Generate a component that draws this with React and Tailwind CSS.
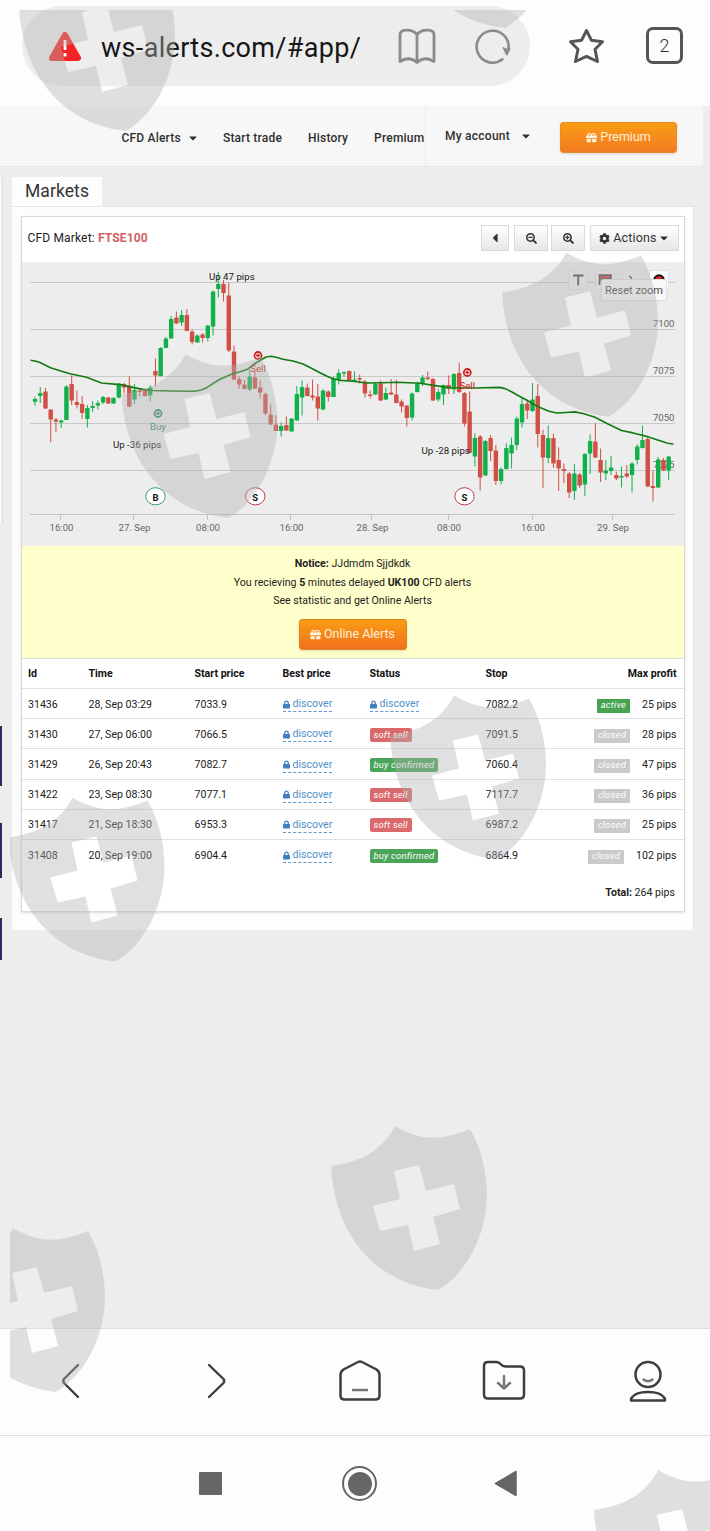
import { FaCaretDown, FaCaretLeft, FaCog, FaGift, FaLock, FaSearchMinus, FaSearchPlus } from "react-icons/fa";

const CANDLES = [
  ["g", 396.7, 399, 401.7, 405.7], ["g", 387, 393, 396, 403], ["r", 388, 391.5, 408.5, 409], ["r", 409.5, 409.5, 419.5, 442],
  ["r", 418, 419.5, 421.5, 432], ["g", 419.5, 420.5, 422.5, 428], ["g", 385, 386.5, 420, 420], ["r", 375.5, 384, 400.5, 405],
  ["r", 390.5, 402, 405, 408.5], ["r", 396, 404, 413, 419], ["g", 405, 408, 419, 427.5], ["g", 401, 406, 408, 412],
  ["g", 400.5, 403, 405.5, 409.5], ["g", 396, 397, 402.5, 404], ["r", 397, 397.5, 403.5, 404], ["g", 397, 398, 403.5, 404],
  ["g", 383, 383.5, 397.5, 398.5], ["r", 383, 384, 387.5, 393], ["r", 376.5, 385.5, 406.5, 407], ["g", 384, 390, 399.5, 404],
  ["r", 388, 390.5, 392, 396.5], ["r", 389, 389.5, 396, 396.5], ["g", 385, 387.5, 395.5, 401.5], ["r", 358.5, 371, 375.5, 386.5],
  ["g", 347, 348, 376, 376.5], ["g", 337, 338.5, 348, 348], ["g", 316, 319, 338.5, 338.5], ["r", 311.5, 317.5, 323.5, 324],
  ["g", 310, 315, 322.5, 326], ["r", 309, 315, 331, 331], ["r", 329.5, 331.5, 342, 344.5], ["g", 334.5, 335.5, 342.5, 342.5],
  ["r", 333, 334.5, 338, 342.5], ["g", 325, 325.5, 338, 341.5], ["g", 290.5, 291.5, 326.5, 335.5], ["g", 272, 284, 289, 297.5],
  ["r", 280, 284, 293, 301.5], ["r", 282.5, 295.5, 350.5, 352], ["r", 345.5, 351.5, 379.5, 380], ["r", 376.5, 379, 384.5, 388.5],
  ["r", 380, 384.5, 389, 389], ["g", 370, 376.5, 389.5, 391], ["r", 371.5, 377.5, 388.5, 389], ["r", 380.5, 387.5, 392.5, 398.5],
  ["r", 392.5, 394, 413.5, 415], ["r", 404.5, 414.5, 424.5, 425], ["r", 415, 424.5, 431, 431], ["g", 422.5, 426, 431, 436.5],
  ["r", 416.5, 425, 430.5, 431], ["g", 418, 418.5, 431.5, 431.5], ["g", 386, 394, 420.5, 420.5], ["g", 380.5, 387, 397.5, 415.5],
  ["r", 383.5, 387.5, 396, 396.5], ["r", 379.5, 395.5, 397.5, 400.5], ["r", 384, 396.5, 408.5, 420.5], ["g", 389.5, 390.5, 409.5, 410],
  ["r", 390.5, 391.5, 397, 401.5], ["g", 376.5, 378.5, 397, 397], ["g", 369.5, 373, 379, 384.5], ["g", 371.5, 372, 373, 376.5],
  ["r", 370.5, 371, 381, 381], ["g", 371.5, 379.5, 381, 381], ["r", 374.5, 378, 379.5, 383.5], ["r", 380, 381.5, 393.5, 397.5],
  ["r", 390.5, 394.5, 396, 398.5], ["g", 383, 384, 394.5, 395], ["r", 380.5, 383.5, 400.5, 401], ["g", 387.5, 393, 399.5, 400],
  ["r", 379, 392.5, 394.5, 395], ["r", 379.5, 394.5, 403, 403.5], ["r", 399.5, 401.5, 406.5, 412.5], ["r", 405, 405.5, 418, 426.5],
  ["g", 392.5, 393.5, 417.5, 420.5], ["g", 381.5, 383.5, 392, 392.5], ["g", 375, 377.5, 383.5, 386], ["r", 371.5, 377.5, 379, 380.5],
  ["r", 378, 379, 400.5, 401], ["g", 388.5, 392, 399.5, 401.5], ["g", 384.5, 385, 394.5, 405], ["r", 375.5, 385, 389, 394],
  ["g", 373, 374, 389.5, 394], ["r", 362.5, 373, 392, 393], ["r", 392, 393, 423.5, 426.5], ["r", 391.5, 411.5, 453, 453],
  ["g", 433.5, 438, 456.5, 466.5], ["r", 435, 436.5, 477.5, 490.5], ["g", 440, 441, 475.5, 476], ["r", 435, 438, 451, 461],
  ["r", 445, 450.5, 481, 485], ["g", 467.5, 469, 481, 484.5], ["g", 443.5, 448, 469, 469.5], ["g", 437.5, 445, 453.5, 468.5],
  ["g", 416.5, 418.5, 445, 450], ["g", 398.5, 404, 422.5, 427.5], ["r", 400, 403.5, 410.5, 419], ["g", 383, 399.5, 411, 412],
  ["r", 384, 396, 434, 447.5], ["r", 430, 435, 457.5, 488], ["g", 425.5, 438, 458, 463], ["r", 433.5, 438, 463.5, 468],
  ["r", 447.5, 460, 468.5, 491], ["r", 463.5, 469, 471, 483], ["r", 472, 473.5, 492.5, 498], ["g", 464, 473.5, 491, 500],
  ["r", 473, 474.5, 485.5, 488], ["g", 453, 454, 484.5, 496], ["g", 434.5, 441, 453.5, 474], ["r", 423.5, 441.5, 457.5, 458],
  ["r", 448.5, 460, 472.5, 482], ["g", 460, 470.5, 473.5, 480], ["g", 456, 467.5, 471, 475], ["r", 471.5, 475, 478.5, 480],
  ["g", 466.5, 476, 477.5, 487.5], ["r", 465, 473.5, 476.5, 478], ["g", 462, 463.5, 475, 492.5], ["g", 444.5, 446.5, 460, 464.5],
  ["g", 425.5, 440, 448, 448.5], ["r", 436.5, 439, 486.5, 487], ["r", 470.5, 486, 488, 501.5], ["g", 457, 459.5, 487.5, 488],
  ["r", 458, 460, 470.5, 471], ["g", 456, 456.5, 470.5, 480],
];

const AVERAGE =
  "30.5,360.3 35,361 40,362.5 50.5,367.8 60,370.8 70,373.7 86.5,377.2 95,380.5 101.5,383 120,384.6 134,387.6 143,389.4 153,390.5 170,391 195,391.2 202,389.8 206.5,387.8 213,383.5 220,379.3 232,374 241,371.5 248,369 255,363.5 262,359.2 266,357 271,356.3 276,357.2 283,359.3 293,361 303,364 312,368.5 320,372.7 327,376.3 333,378.7 341,380.4 353,381.3 367,383 382,382.8 397,382.3 420,383.3 437,385.9 450,387.8 475,388 500,387.4 505,388.6 511.5,391.7 519,396 526.5,400 533,404 540,407.5 549,411.2 557,413 566,412.5 575,411.9 584,413.8 595,417.3 608,424 621.5,430.5 633,432.9 647,436.5 660,440.8 667,443 673.5,444.3";

const TIMES = [
  [61.5, "16:00"], [134.5, "27. Sep"], [208, "08:00"], [291.5, "16:00"],
  [372.5, "28. Sep"], [449, "08:00"], [533, "16:00"], [613, "29. Sep"],
];

const PRICES = [[327, "7100"], [374, "7075"], [421, "7050"], [468, "7025"]];

const SIGNALS = [
  { x: 158, y: 413.5, color: "#2f8a62", label: "Buy" },
  { x: 258, y: 355.5, color: "#cc2222", label: "Sell" },
  { x: 467.3, y: 372.5, color: "#cc2222", label: "Sell" },
];

const FLAGS = [
  { x: 155.5, text: "B", color: "#2f9e6e" },
  { x: 255.3, text: "S", color: "#c43a4a" },
  { x: 464.5, text: "S", color: "#c43a4a" },
];

const ROWS = [
  { id: "31436", time: "28, Sep 03:29", start: "7033.9", status: "discover", stop: "7082.2", state: "active", profit: "25 pips" },
  { id: "31430", time: "27, Sep 06:00", start: "7066.5", status: "soft sell", stop: "7091.5", state: "closed", profit: "28 pips" },
  { id: "31429", time: "26, Sep 20:43", start: "7082.7", status: "buy confirmed", stop: "7060.4", state: "closed", profit: "47 pips" },
  { id: "31422", time: "23, Sep 08:30", start: "7077.1", status: "soft sell", stop: "7117.7", state: "closed", profit: "36 pips" },
  { id: "31417", time: "21, Sep 18:30", start: "6953.3", status: "soft sell", stop: "6987.2", state: "closed", profit: "25 pips" },
  { id: "31408", time: "20, Sep 19:00", start: "6904.4", status: "buy confirmed", stop: "6864.9", state: "closed", profit: "102 pips" },
];

const SHIELDS = [
  [19, -33], [398, -136], [121.5, 354], [502, 252.5], [390, 695.500], [8.5, 797.5], [331, 1126], [-51, 1228], [594, 1470],
];

function BrowserBar() {
  return (
    <div className="h-[106px] bg-[#fdfdfd] pt-1.5 flex items-start">
      <div className="ml-[22px] w-[508px] h-20 rounded-full bg-[#ededed] flex items-center">
        <svg className="ml-[26px] mt-[2px] w-[34px] h-[32px] shrink-0" viewBox="0 0 34 32">
          <path d="M17 4L30 27H4Z" fill="#f52323" stroke="#f52323" strokeWidth="6" strokeLinejoin="round" />
          <path d="M17 9v10M17 22v3.5" stroke="#fff" strokeWidth="2.8" />
        </svg>
        <div className="ml-[19px] mt-[3px] w-[264px] whitespace-nowrap text-[27px] leading-10 tracking-[0.32px] text-[#161616]">
          ws-alerts.com/#app/
        </div>
        <svg className="ml-[33px] w-[38px] h-[38px] shrink-0" viewBox="0 0 38 38" fill="none" stroke="#8b8b8b" strokeWidth="2.8" strokeLinejoin="round">
          <path d="M19 35.500Q11 28.500 2 34.500V8Q2 3.500 8 3.200Q15 2.800 19 7.500Q23 2.800 30 3.200Q36 3.500 36 8V34.500Q27 28.500 19 35.500ZM19 7.500V35" />
        </svg>
        <svg className="ml-[38px] w-[38px] h-[38px] shrink-0" viewBox="0 0 38 38" fill="none" stroke="#8b8b8b" strokeWidth="2.600" strokeLinecap="round">
          <path d="M28.500 32.300A16 16 0 1 1 34.300 23" />
          <path d="M29.500 21L33 27.500L35.500 22" fill="#8b8b8b" strokeLinejoin="round" strokeWidth="1.800" />
        </svg>
      </div>
      <svg className="ml-[38px] mt-[20px] w-[37px] h-[38px]" viewBox="0 0 37 38" fill="none" stroke="#555" strokeWidth="3" strokeLinejoin="round">
        <path d="M18.500 4.500L23.300 14.200L34.500 15.800L27 23.200L29.500 35.500L18.500 30.300L7.500 35.500L10 23.200L2.500 15.800L13.700 14.200Z" />
      </svg>
      <div className="ml-[41px] mt-[21px] w-[37px] h-[37px] rounded-[7px] border-3 border-[#555] flex items-center justify-center text-[18px] font-light text-[#333]">
        2
      </div>
    </div>
  );
}

function SiteHeader() {
  return (
    <div className="h-[61px] w-[703px] bg-[#f7f7f7] border-b border-[#e6e6e6] flex text-[12px] font-medium text-[#2f2f2f]">
      <div className="w-[426px] h-full pl-[121.500px] pt-[3px] flex items-center overflow-hidden whitespace-nowrap border-r border-[#ececec] tracking-[0.2px]">
        <span>CFD Alerts</span>
        <FaCaretDown className="ml-[6px] w-3 h-3 shrink-0" />
        <span className="ml-[24px]">Start trade</span>
        <span className="ml-[26px]">History</span>
        <span className="ml-[26px]">Premium</span>
      </div>
      <div className="flex-1 flex items-center pl-[19px]">
        <span className="tracking-[0.25px]">My account</span>
        <FaCaretDown className="ml-[10px] w-3 h-3" />
        <button className="mt-[2px] ml-[28px] w-[117px] h-[31px] rounded-[3px] border border-[#e98a2a] bg-linear-to-b from-[#f99c13] to-[#f27a20] text-[12.500px] font-normal text-[#fff0dc] flex items-center justify-center gap-[3px] shadow-sm">
          <FaGift className="w-[11px] h-[11px]" />
          Premium
        </button>
      </div>
    </div>
  );
}

function ToolButton({ className, children }) {
  return (
    <button className={`h-[26px] border border-[#dadada] bg-linear-to-b from-white to-[#e6e6e6] flex items-center justify-center text-[#333] ${className}`}>
      {children}
    </button>
  );
}

function PanelHeader() {
  return (
    <div className="h-[45px] flex items-center pb-[3px] pl-[5.500px] pr-[5px] text-[12px] text-[#222]">
      <div className="flex-1 tracking-[0.16px]">
        CFD Market: <b className="font-bold text-[#d0605e]">FTSE100</b>
      </div>
      <ToolButton className="w-[28px]"><FaCaretLeft className="w-3 h-3.5" /></ToolButton>
      <ToolButton className="w-[34px] ml-[5px]"><FaSearchMinus className="w-[11px] h-[11px]" /></ToolButton>
      <ToolButton className="w-[34px] ml-[3px]"><FaSearchPlus className="w-[11px] h-[11px]" /></ToolButton>
      <ToolButton className="w-[89px] ml-[5px] text-[12.500px] tracking-[0.15px]">
        <FaCog className="w-[11px] h-[11px] mr-[3px]" />
        Actions
        <FaCaretDown className="w-[12px] h-[12px] ml-px" />
      </ToolButton>
    </div>
  );
}

function Chart() {
  return (
    <div className="relative bg-[#ededed] h-[284px]">
      <svg className="block w-full h-[284px]" viewBox="22 262 662 284" fontFamily="Roboto, sans-serif" fontSize="9.6">
        {[282.5, 329.5, 376.5, 423.5, 470.5].map((y) => (
          <path key={y} d={`M30 ${y}H675`} stroke="#c9c9c9" />
        ))}
        <path d="M30 514.500H675" stroke="#c4c4c4" />
        {TIMES.map(([x, label]) => (
          <g key={x}>
            <path d={`M${Math.floor(x) - 0.5} 514V520`} stroke="#c4c4c4" />
            <text x={x} y="531" textAnchor="middle" fill="#666">{label}</text>
          </g>
        ))}
        {PRICES.map(([y, label]) => (
          <text key={y} x="674.500" y={y} textAnchor="end" fill="#666">{label}</text>
        ))}
        {CANDLES.map(([c, high, top, bottom, low], i) => {
          const x = 35 + i * 5.237;
          const color = c === "g" ? "#12b04b" : "#d14f45";
          return (
            <g key={i}>
              <path d={`M${x} ${high}V${low}`} stroke={color} />
              <rect x={x - 2.2} y={top} width="4.4" height={Math.max(bottom - top, 1.5)} rx="0.6" fill={color} />
            </g>
          );
        })}
        <polyline points={AVERAGE} fill="none" stroke="#117a11" strokeWidth="1.600" strokeLinejoin="round" />
        {SIGNALS.map((s) => (
          <g key={s.x}>
            <circle cx={s.x} cy={s.y} r="3.500" fill="#fff" stroke={s.color} strokeWidth="1.800" />
            <path d={`M${s.x} ${s.y - 2}v4M${s.x - 2} ${s.y}h4`} stroke={s.color} strokeWidth="1.300" />
            <text x={s.x} y={s.y + 16.5} textAnchor="middle" fill={s.color}>{s.label}</text>
          </g>
        ))}
        <g fill="#222" fontSize="9.700">
          <text x="209" y="280">Up 47 pips</text>
          <text x="113" y="448">Up -36 pips</text>
          <text x="421.500" y="454">Up -28 pips</text>
        </g>
        {FLAGS.map((f) => (
          <g key={f.x}>
            <ellipse cx={f.x} cy="496.300" rx="9.700" ry="8.600" fill="#fff" stroke={f.color} />
            <text x={f.x} y="500.500" textAnchor="middle" fontWeight="bold" fontSize="9.500" fill="#111">{f.text}</text>
          </g>
        ))}
      </svg>

      {/* drawing tools with the reset tooltip over them */}
      <div className="absolute top-[8px] right-[15px] flex gap-[7px]">
        {["text", "flag", "line", "record"].map((tool) => (
          <div key={tool} className={tool === "record" ? "w-5 h-5 border border-[#e2e2e2] bg-[#fbfbfb]" : "w-5 h-5 border border-[#e2e2e2] bg-[#f1f1f1]"}>
            <svg className="w-full h-full" viewBox="0 0 18 18" fill="none">
              {tool === "text" && <path d="M4 4.500H14.500M9.200 4.500V14.500" stroke="#444" strokeWidth="1.800" />}
              {tool === "flag" && <path d="M3.500 14V4H15V8H5" fill="#d03c3c" stroke="#444" strokeWidth="1.600" />}
              {tool === "line" && <path d="M6.500 5L9 7.500" stroke="#444" strokeWidth="1.500" />}
              {tool === "record" && <circle cx="9" cy="9" r="4.800" fill="#d22" stroke="#111" strokeWidth="2" />}
            </svg>
          </div>
        ))}
      </div>
      <div className="absolute top-[17px] left-[579px] w-[66px] h-[22px] border border-[#dedede] rounded-[2px] bg-[#f8f8f8] text-[11px] leading-[21px] text-center text-[#444] whitespace-nowrap">
        Reset zoom
      </div>
    </div>
  );
}

function Notice() {
  return (
    <div className="h-[112px] bg-[#ffffcb] pt-[9px] pr-px text-center text-[10.600px] leading-[18.500px] text-[#222]">
      <p><b>Notice:</b> JJdmdm Sjjdkdk</p>
      <p>You recieving <b>5</b> minutes delayed <b>UK100</b> CFD alerts</p>
      <p>See statistic and get Online Alerts</p>
      <button className="mt-[8px] mx-auto w-[108px] h-[31px] rounded-[3px] border border-[#dd8426] bg-linear-to-b from-[#f99c13] to-[#f1701d] text-[12.500px] text-[#fff0dc] flex items-center justify-center gap-[3px] shadow-sm">
        <FaGift className="w-[11px] h-[11px]" />
        Online Alerts
      </button>
    </div>
  );
}

function Discover() {
  return (
    <span className="mt-px inline-flex items-center gap-[3px] leading-[14px] align-middle text-[#4f8fc9] border-b border-dashed border-[#5b97cc]">
      <FaLock className="w-[7px] h-[9px] text-[#3f7fc4]" />
      discover
    </span>
  );
}

function Status({ value }) {
  if (value === "discover") return <Discover />;
  const color = value === "soft sell" ? "bg-[#d9696b]" : "bg-[#4aa557]";
  return (
    <span className={`inline-block align-middle h-[14px] px-1 rounded-[2px] text-[9.400px] leading-[13px] tracking-[0.22px] italic text-white ${color}`}>
      {value}
    </span>
  );
}

function AlertsTable() {
  return (
    <table className="w-full table-fixed border-collapse text-[10.600px] leading-[15px] text-[#222]">
      <colgroup>
        <col className="w-[60.500px]" />
        <col className="w-[106px]" />
        <col className="w-[88px]" />
        <col className="w-[87px]" />
        <col className="w-[116px]" />
        <col className="w-[70px]" />
        <col />
      </colgroup>
      <thead>
        <tr className="h-[30px] border-t border-[#dcdcdc] text-left text-[#111]">
          <th className="pl-[6px]">Id</th>
          <th className="pl-[6px]">Time</th>
          <th className="pl-[6px]">Start price</th>
          <th className="pl-[6px]">Best price</th>
          <th className="pl-[6px]">Status</th>
          <th className="pl-[6px]">Stop</th>
          <th className="pr-[7.500px] text-right">Max profit</th>
        </tr>
      </thead>
      <tbody>
        {ROWS.map((row) => (
          <tr key={row.id} className="h-[30.200px] border-t border-[#e0e0e0]">
            <td className="pl-[6px] pt-px">{row.id}</td>
            <td className="pl-[6px] pt-px">{row.time}</td>
            <td className="pl-[6px] pt-px">{row.start}</td>
            <td className="pl-[6px] pt-px"><Discover /></td>
            <td className="pl-[6px] pt-px"><Status value={row.status} /></td>
            <td className="pl-[6px] pt-px">{row.stop}</td>
            <td className="pr-[7.500px] pt-px">
              <div className="flex items-center justify-end gap-3">
                <span className={`mt-[3px] h-[14px] px-1 text-[9.400px] leading-[12px] tracking-[0.22px] italic text-white ${row.state === "active" ? "bg-[#47a34f]" : "bg-[#cacaca]"}`}>
                  {row.state}
                </span>
                {row.profit}
              </div>
            </td>
          </tr>
        ))}
      </tbody>
    </table>
  );
}

function Markets() {
  return (
    <div className="flex h-[1161px] pt-[10px]">
      {/* edge of the neighbouring page column */}
      <div className="w-3 flex flex-col items-start">
        <div className="w-[3px] h-[346px] bg-[#f5f5f5] border-r border-[#dcdcdc]" />
        <div className="mt-[203px] w-[2px] h-[60px] bg-[#2e2860]" />
        <div className="mt-[37px] w-[2px] h-[55px] bg-[#2e2860]" />
        <div className="mt-[40px] w-[2px] h-[42px] bg-[#2e2860]" />
      </div>
      <div className="w-[682px]">
        <h1 className="w-[90px] h-[29px] bg-[#fdfdfd] text-center text-[17.500px] leading-[28px] tracking-[0.1px] text-[#333]">Markets</h1>
        <div className="h-[724px] bg-[#fdfdfd] border-t border-r border-[#e6e6e6] pt-[9px] pl-[9px]">
          <div className="w-[664px] h-[696px] bg-white border border-[#dadada] shadow">
            <PanelHeader />
            <Chart />
            <Notice />
            <AlertsTable />
            <p className="mt-[14px] pr-[9px] text-right text-[10.600px] leading-[18px] text-[#222]">
              <b>Total:</b> 264 pips
            </p>
          </div>
        </div>
      </div>
    </div>
  );
}

function BottomNav() {
  return (
    <div className="h-[108px] bg-[#fdfdfd] border-y border-[#dedede] flex items-center justify-between pb-[2px] pl-[50px] pr-[40px]">
      <svg className="w-11 h-11" viewBox="0 0 44 44" fill="none" stroke="#3d3d3d" strokeWidth="2.400" strokeLinecap="round" strokeLinejoin="round">
        <path d="M28 6L14 20Q12.500 22 14 24L28 38" />
      </svg>
      <svg className="w-11 h-11" viewBox="0 0 44 44" fill="none" stroke="#3d3d3d" strokeWidth="2.400" strokeLinecap="round" strokeLinejoin="round">
        <path d="M15 6L29.500 20Q31 22 29.500 24L15 38" />
      </svg>
      <svg className="w-11 h-11" viewBox="0 0 44 44" fill="none" stroke="#3d3d3d" strokeWidth="2.500" strokeLinecap="round" strokeLinejoin="round">
        <path d="M20 3Q22 1.800 24 3L38.500 10.500Q41.500 12.500 41.500 16V36.500Q41.500 40.500 37.500 40.500H6.500Q2.500 40.500 2.500 36.500V16Q2.500 12.500 5.500 10.500Z" />
        <path d="M15 31H29" stroke="#777" />
      </svg>
      <svg className="w-11 h-11" viewBox="0 0 44 44" fill="none" stroke="#3d3d3d" strokeWidth="2.500" strokeLinecap="round" strokeLinejoin="round">
        <path d="M6 3H14.500Q17 3 18.500 5Q20.500 7.500 23.500 7.500H38Q42 7.500 42 11.500V35.500Q42 39.500 38 39.500H6Q2 39.500 2 35.500V7Q2 3 6 3Z" />
        <path d="M22 17V29.500M16 24L22 29.500L28 24" stroke="#777" />
      </svg>
      <svg className="w-11 h-11" viewBox="0 0 44 44" fill="none" stroke="#3d3d3d" strokeWidth="2.500" strokeLinecap="round" strokeLinejoin="round">
        <circle cx="22" cy="15.500" r="12.500" />
        <path d="M17.500 20.500Q22 24 26.500 20.500" stroke="#777" />
        <path d="M5.500 41.500Q4.500 41.500 5.500 39Q9 33 22 33T38.500 39Q39.500 41.500 38.500 41.500Z" />
      </svg>
    </div>
  );
}

function SystemBar() {
  return (
    <div className="h-[95px] bg-[#fdfdfd] flex items-center pl-[198.500px]">
      <div className="w-[23px] h-[23px] rounded-[1px] bg-[#666]" />
      <div className="ml-[120.500px] w-[35px] h-[35px] rounded-full border-2 border-[#666] p-[3.500px]">
        <div className="w-full h-full rounded-full bg-[#666]" />
      </div>
      <svg className="ml-[117px] w-6 h-[27px]" viewBox="0 0 24 27">
        <path d="M22 1.500V25.500L1.500 13.500Z" fill="#666" stroke="#666" strokeLinejoin="round" strokeWidth="1.500" />
      </svg>
    </div>
  );
}

function Watermark() {
  return (
    <svg className="absolute inset-0 w-full h-full pointer-events-none" viewBox="0 0 710 1531">
      <clipPath id="page">
        <rect x="10" y="10" width="700" height="1521" />
      </clipPath>
      <g clipPath="url(#page)" fill="#b2b2b2" fillOpacity="0.4" fillRule="evenodd">
        {SHIELDS.map(([x, y]) => (
          <path
            key={`${x}-${y}`}
            transform={`translate(${x} ${y})`}
            d="M0 40C30 36 52 24 64 0C88 14 108 16 139 3C150 22 156 45 156 71C155 110 135 148 107 164C50 158 4 115 0 40ZM63 45L88 39L95 65L123 58L129 83L102 91L109 118L83 125L77 99L49 105L42 80L69 73Z"
          />
        ))}
      </g>
    </svg>
  );
}

export default function App() {
  return (
    <div className="relative w-[710px] h-[1531px] overflow-hidden bg-[#ededed] font-['Roboto',sans-serif]">
      <BrowserBar />
      <SiteHeader />
      <Markets />
      <BottomNav />
      <SystemBar />
      <Watermark />
    </div>
  );
}
